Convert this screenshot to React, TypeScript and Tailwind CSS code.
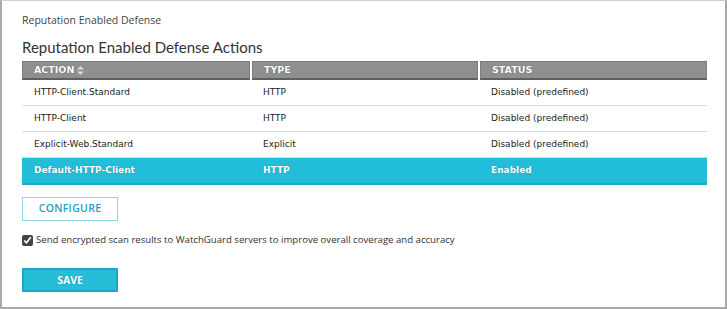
import React from 'react';

type Row = { action: string; type: string; status: string; selected?: boolean };

const rows: Row[] = [
  { action: 'HTTP-Client.Standard', type: 'HTTP', status: 'Disabled (predefined)' },
  { action: 'HTTP-Client', type: 'HTTP', status: 'Disabled (predefined)' },
  { action: 'Explicit-Web.Standard', type: 'Explicit', status: 'Disabled (predefined)' },
  { action: 'Default-HTTP-Client', type: 'HTTP', status: 'Enabled', selected: true },
];

const cols = 'grid grid-cols-[228px_226px_227px] gap-x-[2px]';

export default function App() {
  return (
    <div className="box-border h-[309px] w-[727px] border-x-2 border-t border-b-2 border-x-[#a9a9a9] border-t-[#cfcfcf] border-b-[#a9a9a9] bg-white font-['Open_Sans',sans-serif] text-[#333]">
      <div className="pl-[20px] pr-[16px] pt-[12px]">
        {/* Breadcrumb */}
        <div className="text-[10.5px] leading-[14px] text-[#444]">Reputation Enabled Defense</div>

        <h1 className="mt-[10px] font-['Lato',sans-serif] text-[15px] leading-[20px] text-[#333]">
          Reputation Enabled Defense Actions
        </h1>

        {/* Table */}
        <div className="mt-[4px] w-[685px] font-['DejaVu_Sans',sans-serif]">
          <div className={cols}>
            {['ACTION', 'TYPE', 'STATUS'].map((h, i) => (
              <div
                key={h}
                className="flex h-[19px] items-center gap-[3px] border border-b-2 border-[#7c7c7c] border-b-[#5f5f5f] bg-[#8f8f8f] pl-[11px] text-[9.5px] font-bold text-white [text-shadow:0_0_1px_#444]"
              >
                {h}
                {i === 0 && (
                  <svg width="7" height="9" viewBox="0 0 7 9" className="fill-[#d8d8d8]">
                    <path d="M3.5 0 7 3.6H0z" />
                    <path d="M3.5 9 0 5.4h7z" />
                  </svg>
                )}
              </div>
            ))}
          </div>

          {rows.map((r) => (
            <div
              key={r.action}
              className={
                r.selected
                  ? `${cols} h-[27px] items-center border-b-2 border-[#1ca9c5] bg-[#22bdd9] text-[9px] font-bold text-white [text-shadow:0_0_1px_#0a7f96]`
                  : `${cols} h-[26px] items-center border-b border-[#dddddd] text-[9px] text-[#222]`
              }
            >
              <div className="pl-[12px]">{r.action}</div>
              <div className="pl-[11px]">{r.type}</div>
              <div className="pl-[11px]">{r.status}</div>
            </div>
          ))}
        </div>

        <button className="mt-[12px] flex h-[24px] w-[96px] items-center justify-center border border-[#8ad8ea] bg-white text-[10.5px] font-semibold tracking-[0.3px] text-[#1e9ec0]">
          CONFIGURE
        </button>

        <label className="mt-[12px] flex items-center gap-[3px] text-[9.6px] text-[#333]">
          <input type="checkbox" defaultChecked className="m-0 h-[11px] w-[11px] accent-[#444]" />
          Send encrypted scan results to WatchGuard servers to improve overall coverage and accuracy
        </label>

        <button className="mt-[21px] flex h-[24px] w-[96px] items-center justify-center border-2 border-[#1ca8c3] bg-[#26bdd7] text-[10.5px] font-bold text-white [text-shadow:0_0_1px_#0a7f96]">
          SAVE
        </button>
      </div>
    </div>
  );
}
